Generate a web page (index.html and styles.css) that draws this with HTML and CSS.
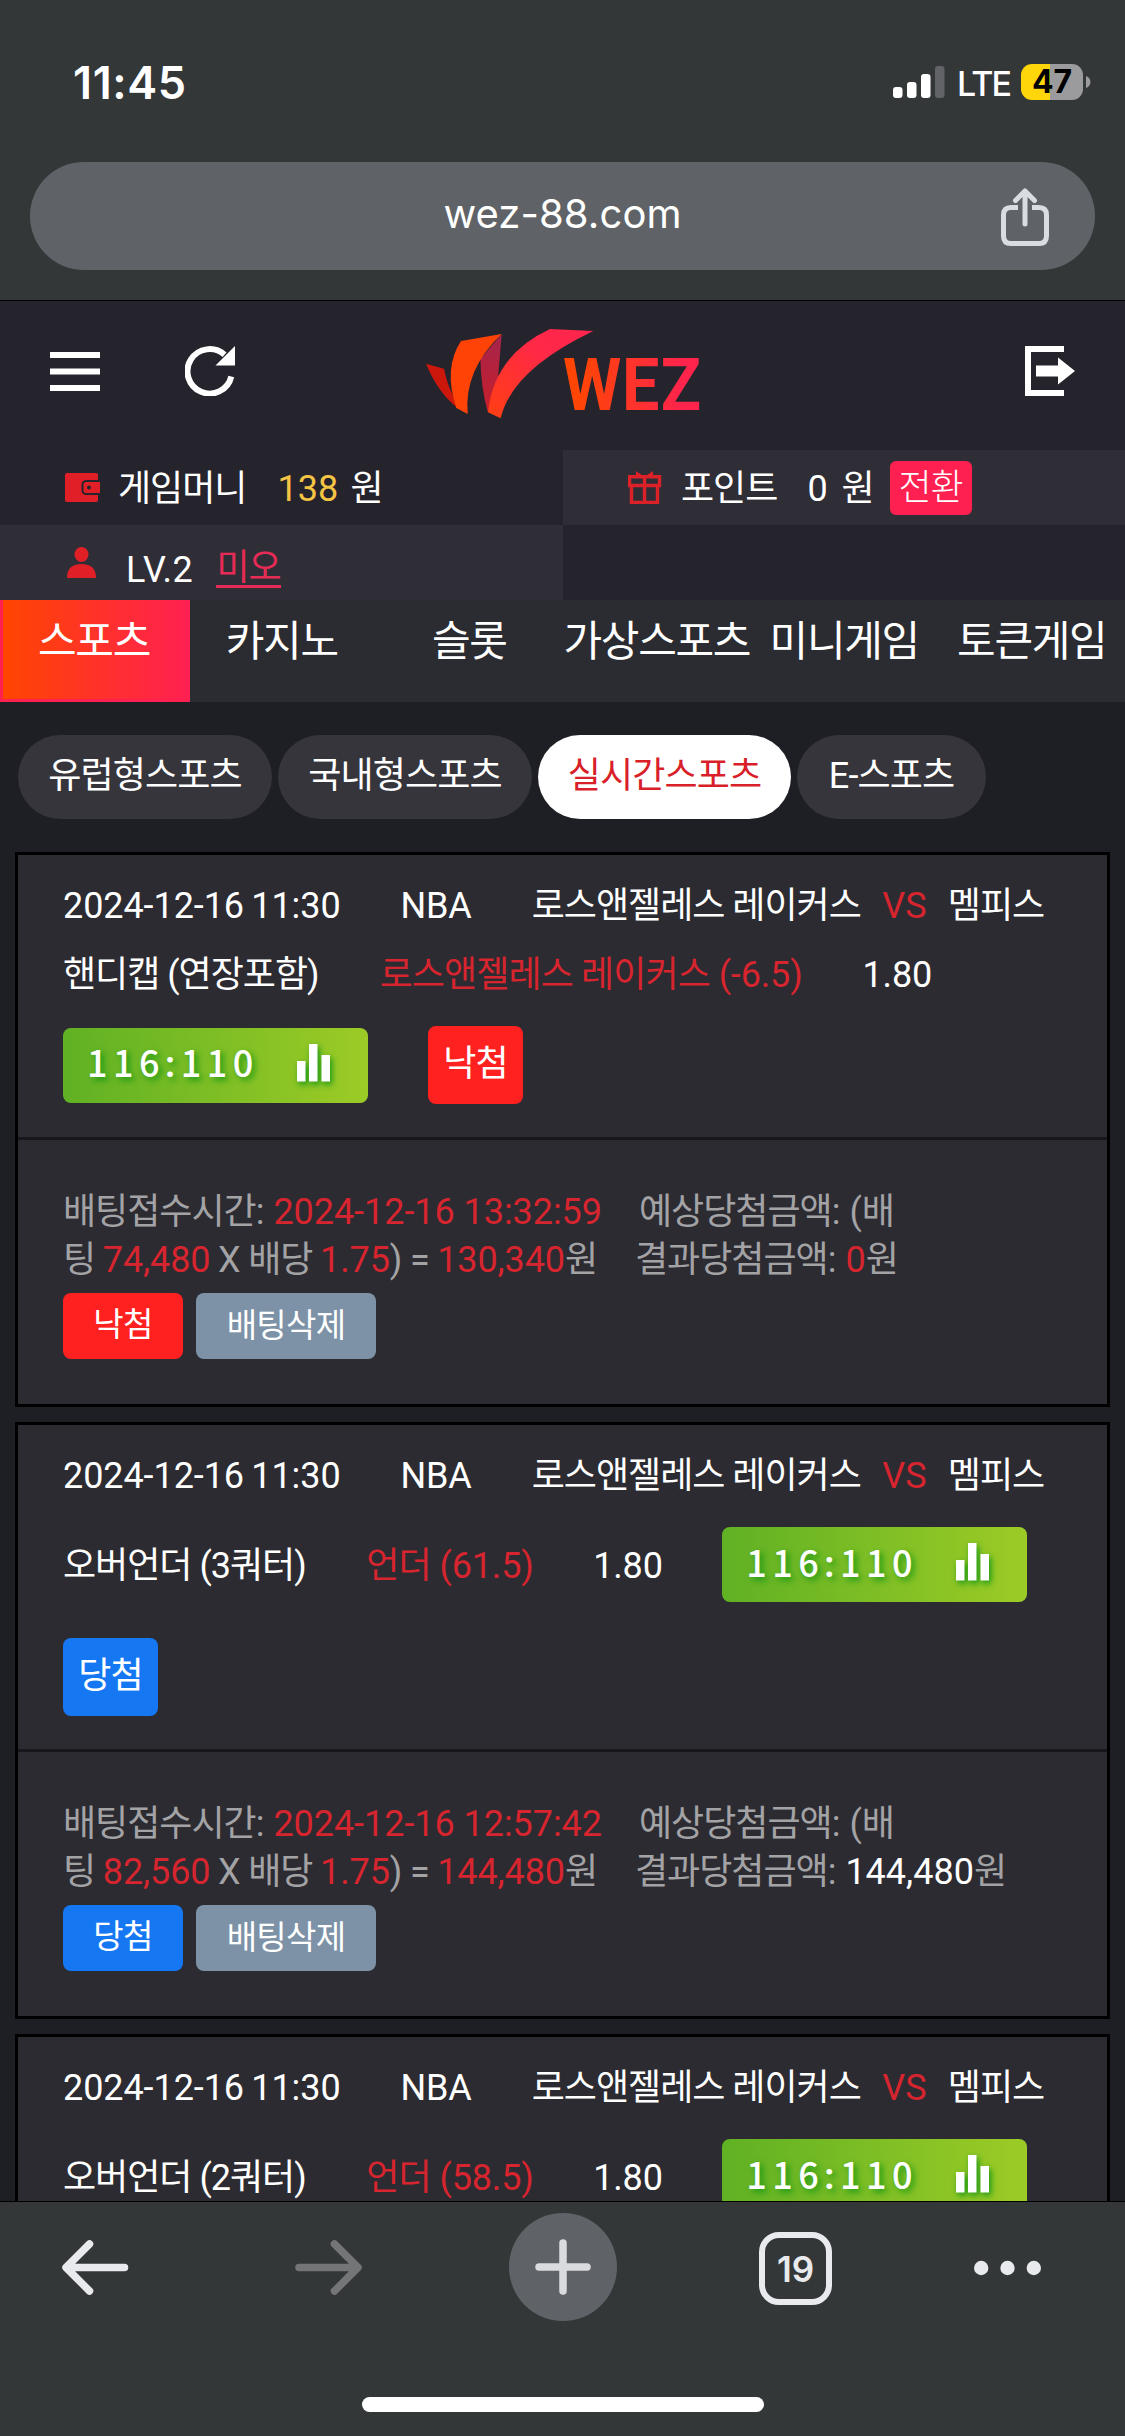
FILE: index.html
```html
<!DOCTYPE html>
<html lang="ko">
<head>
<meta charset="utf-8">
<title>WEZ</title>
<link rel="stylesheet" href="styles.css">
</head>
<body>
<svg class="defs" width="0" height="0">
  <symbol id="chart" viewBox="0 0 33 38"><path d="M0 17h8.500v20.500H0zM12 0h8.500v37.500H12zM24.500 11H33v26.500h-8.500z" fill="#fff"/></symbol>
</svg>
<div class="phone">
  <div class="chrome">
    <div class="status">
      <span class="clock">11:45</span>
      <svg class="signal" width="52" height="34"><g fill="#fff"><rect x="0" y="22" width="9.500" height="11" rx="3"/><rect x="14" y="17" width="9.500" height="16" rx="3"/><rect x="28" y="9" width="9.500" height="24" rx="3"/></g><rect x="42" y="1" width="9.500" height="32" rx="3" fill="#626366"/></svg>
      <span class="lte">LTE</span>
      <span class="battery">47</span>
      <svg class="nub" width="5" height="13"><path d="M0 0C6 2 6 10 0 12z" fill="#9b9b9e"/></svg>
    </div>
    <div class="omnibox">
      <span class="url">wez-88.com</span>
      <svg class="share" width="48" height="60" fill="none" stroke="#d9dce0" stroke-width="5"><path d="M17 19.500H10Q2.500 19.500 2.500 27V48Q2.500 55.500 10 55.500H38Q45.500 55.500 45.500 48V27Q45.500 19.500 38 19.500H31"/><path d="M24 36V4M14.500 12.500L24 3L33.500 12.500" stroke-linecap="round" stroke-linejoin="round"/></svg>
    </div>
  </div>

  <header class="top">
    <svg class="menu" width="50" height="40" fill="#fff"><path d="M0 0h50v6H0zM0 16.500h50v6H0zM0 33h50v6H0z"/></svg>
    <svg class="reload" width="50" height="50"><path d="M46.300 30.500A22.200 22.200 0 1 1 39.500 8.800" fill="none" stroke="#fff" stroke-width="6"/><path d="M50 0V19.500H30.500z" fill="#fff"/></svg>
    <svg class="logo" width="300" height="120" viewBox="0 0 900 360">
      <defs>
        <linearGradient id="gw" gradientUnits="userSpaceOnUse" x1="490" y1="0" x2="800" y2="0"><stop offset="0" stop-color="#ff4505"/><stop offset="1" stop-color="#ff244c"/></linearGradient>
        <linearGradient id="gs" x1="0" y1="1" x2="1" y2="0"><stop offset="0" stop-color="#ff3f12"/><stop offset=".6" stop-color="#ff2945"/><stop offset="1" stop-color="#ff2450"/></linearGradient>
        <linearGradient id="gm" x1="0" y1="1" x2="0" y2="0"><stop offset="0" stop-color="#c91f2a"/><stop offset="1" stop-color="#a5244c"/></linearGradient>
      </defs>
      <path d="M33 146L87 161Q96 205 111 235L127 278Q69 233 33 146z" fill="#cc170d"/>
      <path d="M260 57L249 190L219 293Q198 220 196 132z" fill="url(#gm)"/>
      <path d="M138 78L260 57Q146 165 158 297L124 279Q84 160 138 78z" fill="#ff4206"/>
      <path d="M405 42L535 48Q290 165 257 310L219 292Q237 120 405 42z" fill="url(#gs)"/>
      <text y="285" class="brand" fill="url(#gw)"><tspan x="444" textLength="175" lengthAdjust="spacingAndGlyphs">W</tspan><tspan x="621" textLength="112" lengthAdjust="spacingAndGlyphs">E</tspan><tspan x="737" textLength="121" lengthAdjust="spacingAndGlyphs">Z</tspan></text>
    </svg>
    <svg class="logout" width="50" height="50" fill="#fff"><path d="M39 0V6H6V44H39V50H0V0z"/><path d="M11 19.500H33V11.500L50 25L33 38.500V30.500H11z"/></svg>
  </header>

  <section class="wallet">
    <div class="cell">
      <svg class="ico" width="35" height="30"><path d="M2 0H31Q33 0 33 2V7H22Q16.500 7 16.500 12V17Q16.500 22 22 22H33V27Q33 29 31 29H2Q0 29 0 27V2Q0 0 2 0z" fill="#e01f27"/><path d="M21 9H35V20H21Q18.500 20 18.500 17.500V11.500Q18.500 9 21 9z" fill="#e01f27"/><circle cx="24" cy="14.500" r="1.900" fill="#25242c"/></svg>
      <span>게임머니</span><b class="money">138</b><span class="won">원</span>
    </div>
    <div class="cell lit">
      <svg class="ico" width="35" height="33" fill="none" stroke="#dd2129"><path d="M1.500 5.800H31.500V14.500H1.500zM3.500 14.500V31.500H29.500V14.500M16.500 6V31" stroke-width="3.400"/><path d="M16.500 6L8 0V6zM16.500 6L25 0V6z" fill="#dd2129" stroke="none"/></svg>
      <span>포인트</span><b class="points">0</b><span class="won">원</span><span class="convert">전환</span>
    </div>
    <div class="cell lit user">
      <svg class="ico" width="35" height="31" fill="#e01f27"><ellipse cx="16.500" cy="7.500" rx="7" ry="7.500"/><path d="M2 31Q2 17 16.500 17T31 31z"/></svg>
      <span>LV.2</span><a class="name">미오</a>
    </div>
    <div class="cell"></div>
  </section>

  <nav class="tabs"><a class="on">스포츠</a><a>카지노</a><a>슬롯</a><a>가상스포츠</a><a>미니게임</a><a>토큰게임</a></nav>

  <main>
    <div class="pills"><a>유럽형스포츠</a><a>국내형스포츠</a><a class="on">실시간스포츠</a><a class="short">E-스포츠</a></div>

    <article class="card">
      <div class="bet">
        <div class="row"><span class="date">2024-12-16 11:30</span><span>NBA</span><span><i>로스앤젤레스 레이커스</i><em>VS</em><i>멤피스</i></span></div>
        <div class="row"><span><i>핸디캡 (연장포함)</i></span><span class="red"><i>로스앤젤레스 레이커스</i> (-6.5)</span><span>1.80</span></div>
        <div class="row tall"><span class="score"><span class="pts">116<u>:</u>110</span><svg width="33" height="38"><use href="#chart"/></svg></span><span class="badge lose">낙첨</span></div>
      </div>
      <div class="sum">
        <p><span class="first"><i>배팅접수시간</i>: <em>2024-12-16 13:32:59</em></span><span><i>예상당첨금액</i>: (배</span></p>
        <p><span class="second"><i>팅</i> <em>74,480</em> X <i>배당</i> <em>1.75</em>) = <em>130,340</em><i>원</i></span><span><i>결과당첨금액</i>: <em>0</em>원</span></p>
        <div class="btns"><span class="btn lose">낙첨</span><span class="btn del">배팅삭제</span></div>
      </div>
    </article>

    <article class="card">
      <div class="bet">
        <div class="row"><span class="date">2024-12-16 11:30</span><span>NBA</span><span><i>로스앤젤레스 레이커스</i><em>VS</em><i>멤피스</i></span></div>
        <div class="row mid"><span><i>오버언더 (3쿼터)</i></span><span class="red"><i>언더</i> (61.5)</span><span>1.80</span><span class="score"><span class="pts">116<u>:</u>110</span><svg width="33" height="38"><use href="#chart"/></svg></span></div>
        <div class="row tall"><span class="badge win">당첨</span></div>
      </div>
      <div class="sum">
        <p><span class="first"><i>배팅접수시간</i>: <em>2024-12-16 12:57:42</em></span><span><i>예상당첨금액</i>: (배</span></p>
        <p><span class="second"><i>팅</i> <em>82,560</em> X <i>배당</i> <em>1.75</em>) = <em>144,480</em><i>원</i></span><span><i>결과당첨금액</i>: <strong>144,480</strong>원</span></p>
        <div class="btns"><span class="btn win">당첨</span><span class="btn del">배팅삭제</span></div>
      </div>
    </article>

    <article class="card">
      <div class="bet">
        <div class="row"><span class="date">2024-12-16 11:30</span><span>NBA</span><span><i>로스앤젤레스 레이커스</i><em>VS</em><i>멤피스</i></span></div>
        <div class="row mid"><span><i>오버언더 (2쿼터)</i></span><span class="red"><i>언더</i> (58.5)</span><span>1.80</span><span class="score"><span class="pts">116<u>:</u>110</span><svg width="33" height="38"><use href="#chart"/></svg></span></div>
      </div>
    </article>
  </main>

  <footer class="toolbar">
    <div class="tools">
      <svg class="back" width="67" height="55" fill="none" stroke="#e8eaed" stroke-width="7.500" stroke-linecap="round" stroke-linejoin="round"><path d="M62.500 27.500H5M27.500 4L4 27.500L27.500 51"/></svg>
      <svg class="fwd" width="67" height="55" fill="none" stroke="#747577" stroke-width="7.500" stroke-linecap="round" stroke-linejoin="round"><path d="M4 27.500H62M39.500 4L63 27.500L39.500 51"/></svg>
      <span class="plus"><svg width="56" height="56" stroke="#d9dbdf" stroke-width="7.500" stroke-linecap="round"><path d="M28 4V52M4 28H52"/></svg></span>
      <span class="count">19</span>
      <svg class="dots" width="68" height="16" fill="#e8eaed"><circle cx="7.200" cy="8" r="7.200"/><circle cx="33.500" cy="8" r="7.200"/><circle cx="59.800" cy="8" r="7.200"/></svg>
    </div>
    <div class="home"></div>
  </footer>
</div>
</body>
</html>
```
FILE: styles.css
```css
* { box-sizing: border-box; }
body { margin: 0; background: #1e1f24; }
i, em, b { font-style: normal; font-weight: 400; }
.defs { display: block; position: absolute; }
.phone {
  width: 1125px; height: 2436px; overflow: hidden;
  display: flex; flex-direction: column;
  font: 400 36px/48px Roboto, "Noto Sans CJK KR", sans-serif;
  color: #fff; white-space: nowrap;
}

/* browser chrome */
.chrome { height: 301px; flex: none; background: #343738; border-bottom: 1px solid #000; font-family: Inter, sans-serif; }
.status { height: 162px; display: flex; align-items: flex-start; padding: 64px 34px 0 73px; }
.clock { font-size: 45px; font-weight: 600; line-height: 37px; margin-right: auto; letter-spacing: .6px; }
.signal { margin-top: 1px; }
.lte { width: 52px; margin: 0 12px 0 12px; font-size: 34px; line-height: 39px; letter-spacing: -1.8px; font-weight: 500; }
.battery {
  width: 62px; height: 36px; border-radius: 11px; text-align: center;
  font-size: 32px; line-height: 36px; font-weight: 700; color: #000;
  background: linear-gradient(90deg, #ffd60a 29px, #9b9b9e 29px);
}
.nub { margin: 12px 0 0 3px; }
.omnibox {
  height: 108px; margin: 0 30px; border-radius: 54px; background: #5f6367;
  display: flex; align-items: center; padding: 0 46px 0 94px;
}
.url { flex: 1; text-align: center; font-size: 40px; line-height: 48px; margin-bottom: 4px; letter-spacing: .1px; }
.share { margin-top: 3px; }

/* site header */
.top { height: 149px; flex: none; background: #25242c; display: flex; align-items: flex-start; padding: 45px 50px 0; }
.menu { margin-top: 6px; }
.reload { margin-left: 85px; }
.logo { margin: -31px 0 0 180px; }
.logout { margin-left: auto; }
.brand { font-family: Roboto, sans-serif; font-weight: 700; font-size: 214px; }

.wallet { height: 150px; flex: none; display: grid; grid-template: 75px 75px / 563px 562px; background: #25242c; }
.cell { display: flex; align-items: center; padding-left: 65px; }
.lit { background: #2f2e37; }
.ico { width: 35px; margin-right: 18px; flex: none; }
.cell span, .cell b { padding-top: 2px; }
.cell span { letter-spacing: -1px; }
.money { color: #f5c445; margin-left: 31px; width: 61px; }
.points { margin-left: 30px; width: 20px; }
.cell .won { margin-left: 12px; }
.points + .won { margin-left: 14px; }
.cell .convert {
  height: 54px; margin-left: 16px; padding: 0 9px; border-radius: 6px;
  background: #ff2052; font-weight: 300; line-height: 55px;
}
.user span { margin: 12px 0 0 8px; letter-spacing: .6px; }
.name { color: #e62b56; border-bottom: 3px solid #e62b56; line-height: 37px; height: 38px; margin: 12px 0 0 23px; letter-spacing: -1px; }

.tabs { height: 102px; flex: none; display: grid; grid-template-columns: repeat(6, 187.5px); background: #2b2c31; }
.tabs a { font-size: 42px; line-height: 84px; text-align: center; letter-spacing: -1.3px; padding-left: 1px; }
.tabs .on { width: 190px; padding: 0 5px 0 0; border: solid #ff2052; border-width: 0 0 3px 3px; background: linear-gradient(90deg, #ff4500, #ff2052); }

main { flex: 1; min-height: 0; overflow: hidden; background: #1e1f24; padding: 33px 15px 0; }
.pills { display: flex; gap: 6px; padding-left: 3px; margin-bottom: 33px; }
.pills a { width: 254px; height: 84px; border-radius: 42px; background: #36353c; text-align: center; line-height: 82px; letter-spacing: -.9px; }
.pills .on { width: 253px; background: #fff; color: #d81f2a; }
.pills .short { width: 189px; }

/* bet cards */
.card { border: 3px solid #000; background: #2c2b31; margin-bottom: 15px; }
.card i { letter-spacing: -1px; }
.bet { padding: 15px 45px; border-bottom: 3px solid #18171c; }
.row { height: 69px; display: flex; align-items: center; gap: 60px; }
.row span { padding-top: 3px; letter-spacing: -.15px; }
.row .date { letter-spacing: -.08px; word-spacing: -1.5px; }
.row .red i { letter-spacing: -.9px; }
.row .red { margin-left: 1px; }
.mid { height: 111px; gap: 59.5px; }
.tall { height: 114px; }
.card em, .red { color: #d6252f; }
.row em { margin: 0 21.5px; }
.row .score {
  width: 305px; height: 75px; border-radius: 8px; padding: 0 38px 0 24px;
  display: flex; align-items: center; justify-content: space-between;
  background: linear-gradient(90deg, #60b124, #9ccb26);
  text-shadow: 3px 3px 6px #149614;
}
.row .pts { font-family: "Noto Sans CJK KR", sans-serif; font-weight: 500; letter-spacing: 5.5px; padding: 0 0 4px; }
.pts u { font-family: Roboto, sans-serif; font-weight: 700; text-decoration: none; }
.score svg { filter: drop-shadow(2px 3px 3px #149614); margin-bottom: 5px; }
.row .badge { width: 95px; height: 78px; border-radius: 8px; text-align: center; padding: 0; line-height: 76px; letter-spacing: -.8px; }
.lose { background: #ff2020; }
.win { background: #1577f2; }
.sum { height: 264px; padding: 48px 45px 0; color: #a3a3a6; }
.sum p { margin: 0; display: flex; }
.sum strong { color: #fff; font-weight: 400; }
.first { width: 576px; }
.first em { letter-spacing: -.05px; }
.second { width: 572px; word-spacing: -1.2px; letter-spacing: -.1px; }
.btns { display: flex; gap: 13px; margin-top: 9px; color: #fff; font-size: 33px; }
.btn { width: 120px; height: 66px; border-radius: 8px; text-align: center; line-height: 63px; letter-spacing: -.7px; }
.del { width: 180px; background: #7d92a7; line-height: 66px; }

/* bottom toolbar */
.toolbar { height: 235px; flex: none; background: #343738; border-top: 1px solid #000; }
.tools { height: 131px; display: flex; align-items: center; padding-left: 62px; }
.fwd { margin-left: 166px; }
.plus { width: 108px; height: 108px; margin: -1px 0 0 147px; border-radius: 50%; background: #5f6367; display: flex; align-items: center; justify-content: center; }
.count {
  width: 73px; height: 73px; margin: 1px 0 0 142px; border: 6.5px solid #e8eaed; border-radius: 20px;
  font: 600 35px/62px Inter, sans-serif; color: #e8eaed; text-align: center;
}
.dots { margin: 1px 0 0 142px; }
.home { width: 402px; height: 15px; margin: 64px auto 0; border-radius: 8px; background: #fff; }
```
